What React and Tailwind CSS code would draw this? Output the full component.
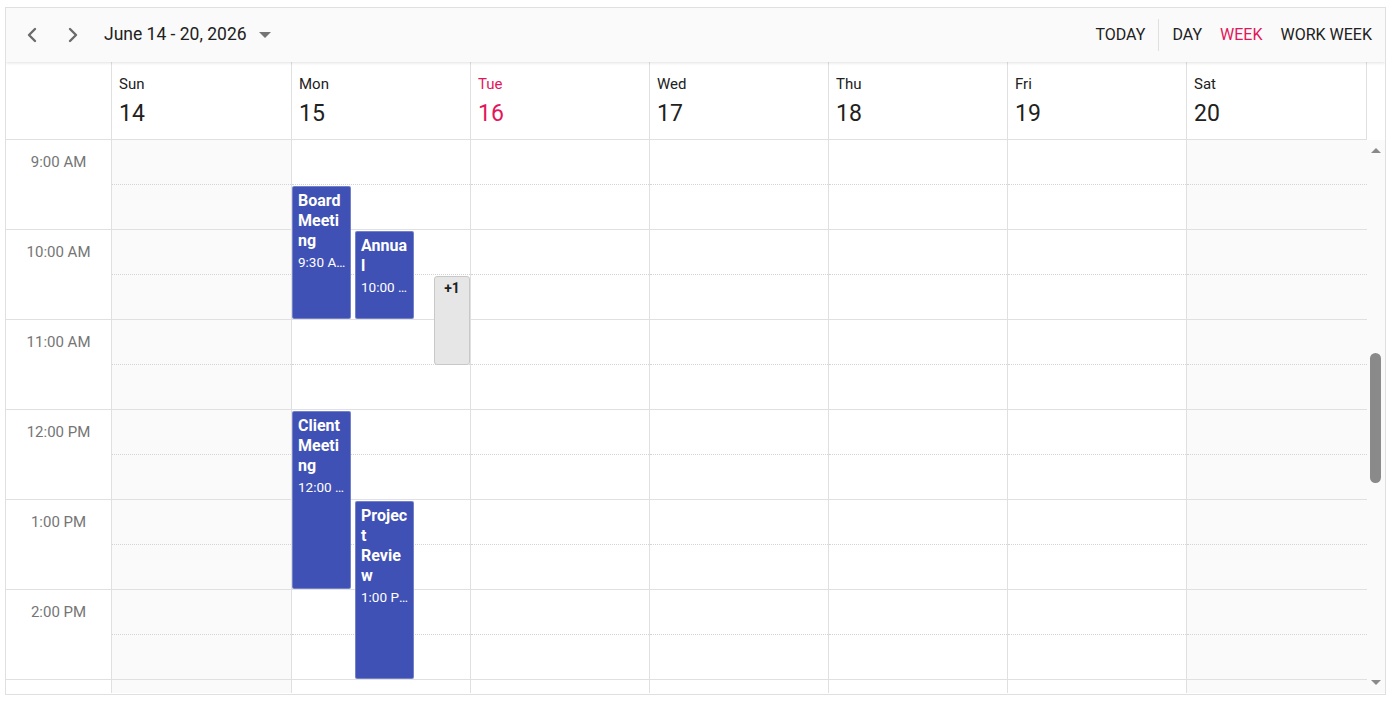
import { ChevronLeft, ChevronRight } from 'lucide-react'

const days = [
  { name: 'Sun', date: 14, off: true, w: 'w-[180px]' },
  { name: 'Mon', date: 15, w: 'w-[179px]' },
  { name: 'Tue', date: 16, today: true, w: 'w-[179px]' },
  { name: 'Wed', date: 17, w: 'w-[179px]' },
  { name: 'Thu', date: 18, w: 'w-[179px]' },
  { name: 'Fri', date: 19, w: 'w-[179px]' },
  { name: 'Sat', date: 20, off: true, w: 'w-[180px]' },
]

const hours = ['9:00 AM', '10:00 AM', '11:00 AM', '12:00 PM', '1:00 PM', '2:00 PM', '3:00 PM']

// Monday events, positioned on the time grid (90px per hour, grid starts at 9:00)
const events = [
  { title: 'Board Meeting', time: '9:30 AM - 11:00 AM', start: 0.5, end: 2, col: 0 },
  { title: 'Annual', time: '10:00 AM - 11:00 AM', start: 1, end: 2, col: 1 },
  { title: 'Client Meeting', time: '12:00 PM - 2:00 PM', start: 3, end: 5, col: 0 },
  { title: 'Project Review', time: '1:00 PM - 3:00 PM', start: 4, end: 6, col: 1 },
]

function Toolbar() {
  return (
    <div className="relative z-10 flex h-[54px] items-center justify-between bg-[#fafafa] pb-[1px] shadow-[0_1px_3px_rgba(0,0,0,0.12)]">
      <div className="flex items-center pl-[6px]">
        <button className="grid size-[40px] place-items-center text-[#6b6b6b]">
          <ChevronLeft className="size-[24px]" strokeWidth={2.4} />
        </button>
        <button className="ml-[1px] grid size-[40px] place-items-center text-[#6b6b6b]">
          <ChevronRight className="size-[24px]" strokeWidth={2.4} />
        </button>
        <div className="ml-[11px] flex items-center text-[17.5px] text-[#212121]">
          June 14 - 20, 2026
          <span className="ml-[12px] mt-[1px] h-0 w-0 border-x-[6px] border-t-[6px] border-x-transparent border-t-[#757575]" />
        </div>
      </div>
      <div className="flex items-center pr-[13px] text-[16px] text-[#212121]">
        <span>TODAY</span>
        <span className="mx-[13px] h-[32px] w-px bg-[#e0e0e0]" />
        <span>DAY</span>
        <span className="ml-[18px] text-[#e3165b]">WEEK</span>
        <span className="ml-[18px]">WORK WEEK</span>
      </div>
    </div>
  )
}

function HeaderRow() {
  return (
    <div className="flex h-[78px]">
      <div className="w-[106px] shrink-0 border-r border-b border-[#e0e0e0]" />
      {days.map((d) => (
        <div
          key={d.name}
          className={`${d.w} shrink-0 border-r border-b border-[#e0e0e0] pl-[7px] pt-[12px] ${d.today ? 'text-[#e3165b]' : 'text-[#212121]'}`}
        >
          <div className="text-[15px] leading-[20px]">{d.name}</div>
          <div className="mt-[6px] text-[23px] leading-[28px]">{d.date}</div>
        </div>
      ))}
    </div>
  )
}

function EventCard({ ev }) {
  const top = ev.start * 90 + 1
  const height = (ev.end - ev.start) * 90 - 2
  const left = ev.col === 0 ? 0 : 63
  return (
    <div
      className="absolute w-[59px] overflow-hidden rounded-[2px] border border-[#c5cae9]/40 bg-[#3f51b5] pl-[5px] pr-[4px] pt-[4px] text-white"
      style={{ top, height, left }}
    >
      <div className="text-[16px] font-bold leading-[20px] [overflow-wrap:anywhere]">{ev.title}</div>
      <div className="mt-[1px] truncate text-[13.5px] leading-[20px]">{ev.time}</div>
    </div>
  )
}

function Grid() {
  return (
    <div className="flex h-[553px] overflow-hidden">
      <div className="w-[106px] shrink-0">
        {hours.map((h) => (
          <div key={h} className="h-[90px] border-r border-b border-[#e0e0e0] pt-[12px] text-center text-[15px] leading-[21px] text-[#757575]">
            {h}
          </div>
        ))}
      </div>
      {days.map((d, i) => (
        <div
          key={d.name}
          className={`relative ${d.w} shrink-0 ${i < 6 ? 'border-r' : ''} border-[#e0e0e0] ${d.off ? 'bg-[#fafafa]' : 'bg-white'}`}
        >
          {hours.map((h) => (
            <div key={h} className="h-[90px] border-b border-[#e0e0e0]">
              <div className="h-[45px] border-b border-dotted border-[#d4d4d4]" />
            </div>
          ))}
          {d.name === 'Mon' && (
            <>
              {events.map((ev) => (
                <EventCard key={ev.title} ev={ev} />
              ))}
              <div className="absolute left-[142px] top-[136px] h-[89px] w-[36px] rounded-[3px] border border-[#c8c8c8] bg-[#e6e6e6] pt-[1px] text-center text-[14px] font-bold leading-[20px] text-[#212121]">
                +1
              </div>
            </>
          )}
        </div>
      ))}
      <div className="relative w-[18px] shrink-0 bg-[#fafafa]">
        <span className="absolute left-[4px] top-[8px] h-0 w-0 border-x-[5px] border-b-[5px] border-x-transparent border-b-[#8a8a8a]" />
        <span className="absolute left-[3px] top-[213px] h-[130px] w-[11px] rounded-full bg-[#8a8a8a]" />
        <span className="absolute bottom-[8px] left-[4px] h-0 w-0 border-x-[5px] border-t-[5px] border-x-transparent border-t-[#8a8a8a]" />
      </div>
    </div>
  )
}

export default function App() {
  return (
    <div className="bg-white pl-[5px] pt-[7px] font-['Roboto',sans-serif]">
      <div className="h-[688px] w-[1381px] overflow-hidden border border-[#e0e0e0]">
        <Toolbar />
        <HeaderRow />
        <Grid />
      </div>
    </div>
  )
}
